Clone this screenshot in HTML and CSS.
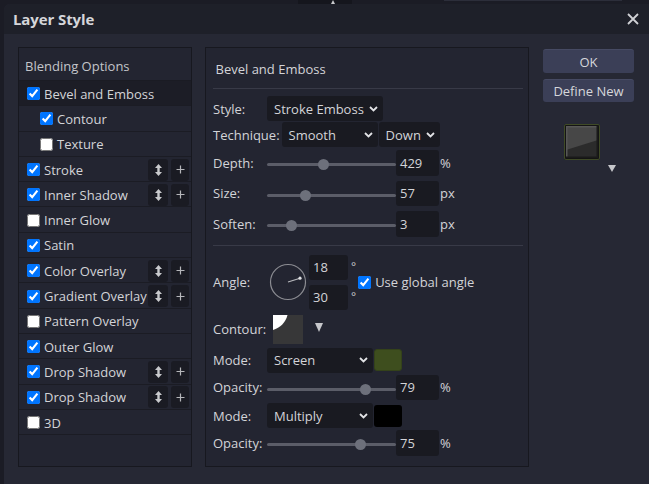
FILE: index.html
```html
<!DOCTYPE html>
<html>
<head>
<meta charset="utf-8">
<link rel="stylesheet" href="styles.css">
</head>
<body>
<div class="bgstrip">
  <div class="bg-block"></div>
  <div class="bg-tri"></div>
  <div class="bg-line"></div>
</div>
<div class="dialog">
  <div class="titlebar">
    <span class="title">Layer Style</span>
    <svg class="close" width="12" height="12" viewBox="0 0 12 12"><path d="M1 1L11 11M11 1L1 11" stroke="#d0d1d5" stroke-width="1.8"/></svg>
  </div>
  <div class="body">
    <div class="left-panel">
      <div class="lp-head">Blending Options</div>
      <div class="row sel-row"><input type="checkbox" checked><span class="rl">Bevel and Emboss</span></div>
      <div class="row sub"><input type="checkbox" checked><span class="rl">Contour</span></div>
      <div class="row sub"><input type="checkbox"><span class="rl">Texture</span></div>
      <div class="row"><input type="checkbox" checked><span class="rl">Stroke</span><span class="sb sb1"><svg width="7" height="12" viewBox="0 0 7 12"><path d="M3.5 0L7 4H0Z M3.5 12L7 8H0Z" fill="#c9cacd"/><rect x="2.3" y="3" width="2.4" height="6" fill="#c9cacd"/></svg></span><span class="sb sb2"><svg width="9" height="9" viewBox="0 0 9 9"><path d="M4.5 0.5V8.5M0.5 4.5H8.5" stroke="#b5b6ba" stroke-width="1.2"/></svg></span></div>
      <div class="row"><input type="checkbox" checked><span class="rl">Inner Shadow</span><span class="sb sb1"><svg width="7" height="12" viewBox="0 0 7 12"><path d="M3.5 0L7 4H0Z M3.5 12L7 8H0Z" fill="#c9cacd"/><rect x="2.3" y="3" width="2.4" height="6" fill="#c9cacd"/></svg></span><span class="sb sb2"><svg width="9" height="9" viewBox="0 0 9 9"><path d="M4.5 0.5V8.5M0.5 4.5H8.5" stroke="#b5b6ba" stroke-width="1.2"/></svg></span></div>
      <div class="row"><input type="checkbox"><span class="rl">Inner Glow</span></div>
      <div class="row"><input type="checkbox" checked><span class="rl">Satin</span></div>
      <div class="row"><input type="checkbox" checked><span class="rl">Color Overlay</span><span class="sb sb1"><svg width="7" height="12" viewBox="0 0 7 12"><path d="M3.5 0L7 4H0Z M3.5 12L7 8H0Z" fill="#c9cacd"/><rect x="2.3" y="3" width="2.4" height="6" fill="#c9cacd"/></svg></span><span class="sb sb2"><svg width="9" height="9" viewBox="0 0 9 9"><path d="M4.5 0.5V8.5M0.5 4.5H8.5" stroke="#b5b6ba" stroke-width="1.2"/></svg></span></div>
      <div class="row"><input type="checkbox" checked><span class="rl">Gradient Overlay</span><span class="sb sb1"><svg width="7" height="12" viewBox="0 0 7 12"><path d="M3.5 0L7 4H0Z M3.5 12L7 8H0Z" fill="#c9cacd"/><rect x="2.3" y="3" width="2.4" height="6" fill="#c9cacd"/></svg></span><span class="sb sb2"><svg width="9" height="9" viewBox="0 0 9 9"><path d="M4.5 0.5V8.5M0.5 4.5H8.5" stroke="#b5b6ba" stroke-width="1.2"/></svg></span></div>
      <div class="row"><input type="checkbox"><span class="rl">Pattern Overlay</span></div>
      <div class="row"><input type="checkbox" checked><span class="rl">Outer Glow</span></div>
      <div class="row"><input type="checkbox" checked><span class="rl">Drop Shadow</span><span class="sb sb1"><svg width="7" height="12" viewBox="0 0 7 12"><path d="M3.5 0L7 4H0Z M3.5 12L7 8H0Z" fill="#c9cacd"/><rect x="2.3" y="3" width="2.4" height="6" fill="#c9cacd"/></svg></span><span class="sb sb2"><svg width="9" height="9" viewBox="0 0 9 9"><path d="M4.5 0.5V8.5M0.5 4.5H8.5" stroke="#b5b6ba" stroke-width="1.2"/></svg></span></div>
      <div class="row"><input type="checkbox" checked><span class="rl">Drop Shadow</span><span class="sb sb1"><svg width="7" height="12" viewBox="0 0 7 12"><path d="M3.5 0L7 4H0Z M3.5 12L7 8H0Z" fill="#c9cacd"/><rect x="2.3" y="3" width="2.4" height="6" fill="#c9cacd"/></svg></span><span class="sb sb2"><svg width="9" height="9" viewBox="0 0 9 9"><path d="M4.5 0.5V8.5M0.5 4.5H8.5" stroke="#b5b6ba" stroke-width="1.2"/></svg></span></div>
      <div class="row"><input type="checkbox"><span class="rl">3D</span></div>
    </div>

    <div class="mid-panel">
      <div class="mp-head">Bevel and Emboss</div>
      <div class="f r-style">
        <span class="lbl">Style:</span>
        <div class="sel w-style"><span>Stroke Emboss</span><svg class="chev" width="9" height="6" viewBox="0 0 9 6"><path d="M1 1L4.5 4.5L8 1" stroke="#e2e3e6" stroke-width="1.8" fill="none"/></svg></div>
      </div>
      <div class="f r-tech">
        <span class="lbl auto">Technique:</span>
        <div class="sel w-tech"><span>Smooth</span><svg class="chev" width="9" height="6" viewBox="0 0 9 6"><path d="M1 1L4.5 4.5L8 1" stroke="#e2e3e6" stroke-width="1.8" fill="none"/></svg></div>
        <div class="sel w-down"><span>Down</span><svg class="chev" width="9" height="6" viewBox="0 0 9 6"><path d="M1 1L4.5 4.5L8 1" stroke="#e2e3e6" stroke-width="1.8" fill="none"/></svg></div>
      </div>
      <div class="f r-depth">
        <span class="lbl">Depth:</span>
        <div class="slider"><div class="track"></div><div class="thumb" style="left:51px"></div></div>
        <div class="num">429</div><span class="unit">%</span>
      </div>
      <div class="f r-size">
        <span class="lbl">Size:</span>
        <div class="slider"><div class="track"></div><div class="thumb" style="left:33px"></div></div>
        <div class="num">57</div><span class="unit">px</span>
      </div>
      <div class="f r-soften">
        <span class="lbl">Soften:</span>
        <div class="slider"><div class="track"></div><div class="thumb" style="left:18.5px"></div></div>
        <div class="num">3</div><span class="unit">px</span>
      </div>
      <div class="sep"></div>
      <div class="f r-angle">
        <span class="lbl">Angle:</span>
        <svg class="dial" width="38" height="38" viewBox="0 0 38 38"><circle cx="19" cy="19" r="17.5" fill="none" stroke="#8b8c92" stroke-width="1.2"/><path d="M19 19L31 15.2" stroke="#b8b9bd" stroke-width="1.2"/><circle cx="31" cy="15.2" r="1.6" fill="#e0e1e4"/></svg>
        <div class="angle-inputs">
          <div class="ai"><div class="num sm">18</div><span class="deg">°</span></div>
          <div class="ai"><div class="num sm">30</div><span class="deg">°</span></div>
        </div>
        <label class="glob"><input type="checkbox" checked><span>Use global angle</span></label>
      </div>
      <div class="f r-contour">
        <span class="lbl">Contour:</span>
        <svg class="cthumb" width="30" height="29" viewBox="0 0 30 29"><rect width="30" height="29" fill="#373738"/><path d="M0 0H14.5C13 7 7 13 0 15Z" fill="#ffffff"/></svg>
        <span class="tri ctri"></span>
      </div>
      <div class="f r-mode1">
        <span class="lbl">Mode:</span>
        <div class="sel w-mode"><span>Screen</span><svg class="chev" width="9" height="6" viewBox="0 0 9 6"><path d="M1 1L4.5 4.5L8 1" stroke="#e2e3e6" stroke-width="1.8" fill="none"/></svg></div>
        <div class="swatch green"></div>
      </div>
      <div class="f r-op1">
        <span class="lbl">Opacity:</span>
        <div class="slider"><div class="track"></div><div class="thumb" style="left:93px"></div></div>
        <div class="num">79</div><span class="unit">%</span>
      </div>
      <div class="f r-mode2">
        <span class="lbl">Mode:</span>
        <div class="sel w-mode"><span>Multiply</span><svg class="chev" width="9" height="6" viewBox="0 0 9 6"><path d="M1 1L4.5 4.5L8 1" stroke="#e2e3e6" stroke-width="1.8" fill="none"/></svg></div>
        <div class="swatch black"></div>
      </div>
      <div class="f r-op2">
        <span class="lbl">Opacity:</span>
        <div class="slider"><div class="track"></div><div class="thumb" style="left:88px"></div></div>
        <div class="num">75</div><span class="unit">%</span>
      </div>
    </div>

    <div class="right-col">
      <div class="btn ok">OK</div>
      <div class="btn">Define New</div>
      <div class="preview-wrap">
        <svg class="preview" width="36" height="36" viewBox="0 0 36 36">
          <rect x="0.5" y="0.5" width="35" height="35" rx="1.5" fill="#141414" stroke="#3f4a26"/>
          <rect x="2" y="2" width="32" height="32" fill="#2b2b2b"/>
          <path d="M2 2H34V16L2 26Z" fill="#474747"/>
          <path d="M2 2H34V3.5H3.5V34H2Z" fill="#575757"/>
          <rect x="32.5" y="2" width="1.5" height="32" fill="#1a1a1a"/>
          <rect x="2" y="32.5" width="32" height="1.5" fill="#1a1a1a"/>
        </svg>
        <span class="tri ptri"></span>
      </div>
    </div>
  </div>
</div>
</body>
</html>
```

FILE: styles.css
```css
* { box-sizing: border-box; }
html, body { margin: 0; padding: 0; }
body {
  background: #1b1c25;
  width: 649px;
  height: 484px;
  overflow: hidden;
  font-family: "Open Sans", "Noto Sans", sans-serif;
  font-size: 13px;
  color: #d3d4d8;
  position: relative;
}
.bgstrip { position: absolute; left: 0; top: 0; width: 649px; height: 4px; }
.bg-block { position: absolute; left: 298px; top: 0; width: 54px; height: 4px; background: #15161d; }
.bg-tri { position: absolute; left: 331px; top: 0; width: 0; height: 0; border-left: 2px solid transparent; border-right: 2px solid transparent; border-bottom: 4px solid #c8c9cc; }
.bg-line { position: absolute; left: 444px; top: 0; width: 178px; height: 1px; background: #2c2e3a; }

.dialog {
  margin: 4px 0 0 4px;
  height: 480px;
  background: #262834;
  border-radius: 6px 0 0 0;
  display: flex;
  flex-direction: column;
}
.titlebar {
  height: 29.5px;
  flex: none;
  background: #1e2029;
  border-radius: 6px 0 0 0;
  display: flex;
  align-items: center;
  justify-content: space-between;
  padding: 0 10.5px 0 9px;
}
.title { font-weight: bold; font-size: 15px; color: #d5d6da; letter-spacing: -0.1px; }
.close { display: block; margin-top: 1px; }

.body {
  display: flex;
  align-items: flex-start;
  padding: 13.5px 0 0 14px;
}

/* Left panel */
.left-panel {
  width: 174px;
  height: 420px;
  flex: none;
  border: 1px solid #17181f;
  background: #232531;
}
.lp-head {
  height: 33px;
  border-bottom: 1px solid #1a1b23;
  padding: 3px 0 0 6px;
  display: flex;
  align-items: center;
  color: #c4c5ca;
}
.row {
  height: 25.3px;
  border-bottom: 1px solid #1b1c24;
  display: flex;
  align-items: center;
  padding: 1px 2px 0 8px;
}
.row.sel-row { background: #1c1d26; }
.row.sub { padding-left: 21px; }
.row input, .glob input {
  width: 13px; height: 13px;
  margin: 0 4px 0 0;
  flex: none;
}
.rl { flex: 1; white-space: nowrap; }
.sb {
  flex: none;
  height: 22px;
  background: #1a1b23;
  border-radius: 3px;
  display: flex;
  align-items: center;
  justify-content: center;
}
.sb1 { width: 20px; }
.sb2 { width: 18px; margin-left: 3px; }

/* Middle panel */
.mid-panel {
  width: 324px;
  height: 420px;
  flex: none;
  margin-left: 13px;
  border: 1px solid #17181f;
  background: #232531;
  padding: 0 5px 0 7px;
}
.mp-head {
  height: 41px;
  border-bottom: 1px solid #383a47;
  padding: 2px 0 0 2.5px;
  display: flex;
  align-items: center;
}
.f { display: flex; align-items: center; }
.lbl { width: 54px; flex: none; white-space: nowrap; }
.lbl.auto { width: auto; margin-right: 2px; }
.sel {
  height: 25px;
  background: #191a21;
  border-radius: 3px;
  display: flex;
  align-items: center;
  justify-content: space-between;
  padding: 0 5px 0 7px;
  flex: none;
}
.chev { display: block; }
.w-style { width: 116px; }
.w-tech { width: 96px; }
.w-down { width: 61px; margin-left: 1px; padding-left: 7px; }
.w-mode { width: 106px; }

.r-style { margin-top: 7px; }
.r-tech { margin-top: 1px; }
.r-depth { margin-top: 3px; }
.r-size, .r-soften { margin-top: 5px; }
.sep { height: 1px; background: #383a47; margin-top: 8px; }
.r-angle { margin-top: 9px; }
.r-contour { margin-top: 5px; height: 29px; }
.r-mode1 { margin-top: 4px; }
.r-op1 { margin-top: 2px; }
.r-mode2 { margin-top: 3px; }
.r-op2 { margin-top: 2px; }

.slider { position: relative; width: 129px; height: 25px; flex: none; }
.track { position: absolute; left: 0; right: 0; top: 13px; height: 3px; border-radius: 2px; background: #5b5d68; }
.thumb { position: absolute; top: 9px; width: 11px; height: 11px; border-radius: 50%; background: #6d707b; }
.num {
  width: 43px; height: 25.5px;
  background: #191a21;
  border-radius: 3px;
  padding-left: 4px;
  display: flex;
  align-items: center;
  flex: none;
}
.num.sm { width: 39px; height: 25px; }
.unit { margin-left: 1px; }

.dial { display: block; margin-left: 1.5px; flex: none; }
.angle-inputs { display: flex; flex-direction: column; gap: 5px; margin-left: 2.5px; }
.ai { display: flex; align-items: flex-start; }
.deg { font-size: 12px; line-height: 12px; margin-left: 3px; margin-top: 6px; color: #c9cacd; }
.glob { display: flex; align-items: center; margin-left: 2px; }

.cthumb { display: block; margin-left: 6px; flex: none; }
.tri {
  width: 0; height: 0;
  border-left: 4.5px solid transparent;
  border-right: 4.5px solid transparent;
  border-top: 9px solid #c6c7cb;
  flex: none;
}
.ctri { margin-left: 12px; margin-top: -4px; }
.swatch { width: 28px; height: 22px; border-radius: 3px; margin-left: 1px; flex: none; }
.swatch.green { background: #3e4e1e; border: 1px solid #34421a; }
.swatch.black { background: #000000; }

/* Right column */
.right-col { width: 91px; flex: none; margin-left: 14px; padding-top: 2.3px; display: flex; flex-direction: column; }
.btn {
  height: 23.5px;
  background: #3b3f57;
  border-radius: 3px;
  border-top: 1px solid #464a63;
  display: flex;
  align-items: center;
  justify-content: center;
  color: #d6d7db;
}
.btn + .btn { margin-top: 6px; }
.preview-wrap { display: flex; align-items: flex-end; margin-top: 22px; padding-left: 21px; }
.preview { display: block; flex: none; }
.ptri {
  margin-left: 8px; margin-bottom: -12px;
  border-left-width: 4px; border-right-width: 4px; border-top-width: 7px;
}
```
